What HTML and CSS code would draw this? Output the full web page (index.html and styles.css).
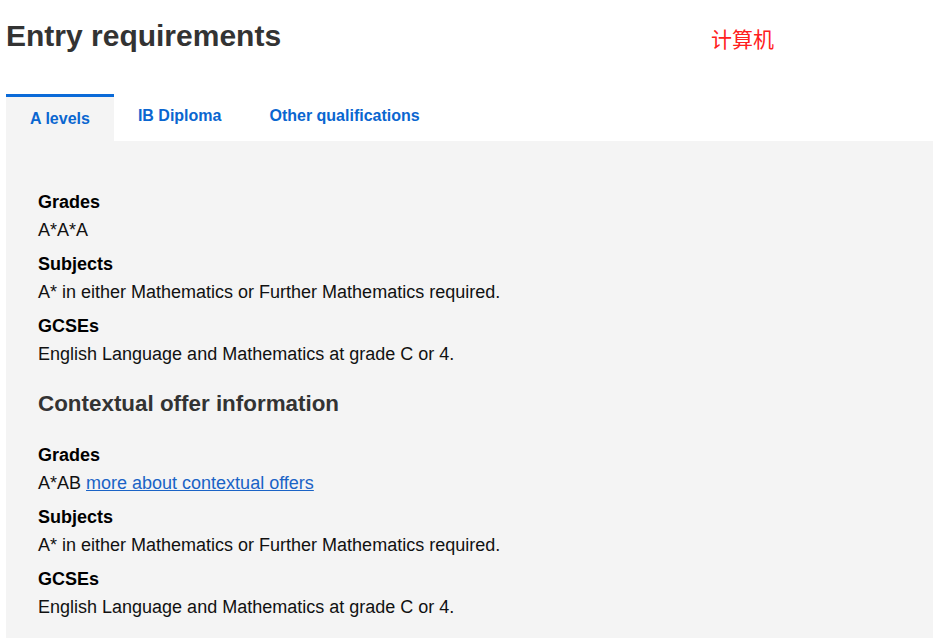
FILE: index.html
```html
<!DOCTYPE html>
<html lang="en">
<head>
<meta charset="utf-8">
<title>Entry requirements</title>
<link rel="stylesheet" href="styles.css">
</head>
<body>
<div class="page">
  <h1 class="title">Entry requirements</h1>
  <span class="note">计算机</span>
  <div class="tabs">
    <div class="tab active">A levels</div>
    <div class="tab">IB Diploma</div>
    <div class="tab">Other qualifications</div>
  </div>
  <div class="panel">
    <div class="group">
      <div class="label">Grades</div>
      <div class="value">A*A*A</div>
    </div>
    <div class="group">
      <div class="label">Subjects</div>
      <div class="value">A* in either Mathematics or Further Mathematics required.</div>
    </div>
    <div class="group">
      <div class="label">GCSEs</div>
      <div class="value">English Language and Mathematics at grade C or 4.</div>
    </div>
    <h2 class="subhead">Contextual offer information</h2>
    <div class="group">
      <div class="label">Grades</div>
      <div class="value">A*AB <a class="link" href="#">more about contextual offers</a></div>
    </div>
    <div class="group">
      <div class="label">Subjects</div>
      <div class="value">A* in either Mathematics or Further Mathematics required.</div>
    </div>
    <div class="group">
      <div class="label">GCSEs</div>
      <div class="value">English Language and Mathematics at grade C or 4.</div>
    </div>
  </div>
</div>
</body>
</html>
```
FILE: styles.css
```css
html, body {
  margin: 0;
  padding: 0;
  background: #ffffff;
}
body {
  font-family: "Liberation Sans", Arial, sans-serif;
  color: #111111;
}
.page {
  position: relative;
  padding: 18px 12px 0 6px;
}
.title {
  margin: 0;
  font-size: 30px;
  line-height: 36px;
  font-weight: bold;
  color: #333333;
}
.note {
  position: absolute;
  left: 711px;
  top: 23px;
  font-family: "Noto Sans CJK SC", "Liberation Sans", sans-serif;
  font-size: 21px;
  line-height: 30px;
  color: #ff2020;
}
.tabs {
  display: flex;
  align-items: flex-start;
  margin-top: 40px;
}
.tab {
  padding: 12px 24px;
  font-size: 16px;
  line-height: 20px;
  font-weight: bold;
  color: #0a66d0;
}
.tab.active {
  border-top: 3px solid #0a6ad8;
  background: #f4f4f4;
  padding-bottom: 12px;
}
.panel {
  background: #f4f4f4;
  padding: 47px 32px 24px 32px;
}
.group {
  margin-bottom: 6px;
}
.label {
  font-size: 18px;
  line-height: 28px;
  font-weight: bold;
  color: #000000;
}
.value {
  font-size: 18px;
  line-height: 28px;
  color: #111111;
}
.link {
  color: #1a63c6;
  text-decoration: underline;
}
.subhead {
  margin: 22px 0 23px;
  font-size: 22.4px;
  line-height: 28px;
  font-weight: bold;
  color: #333333;
}
```
